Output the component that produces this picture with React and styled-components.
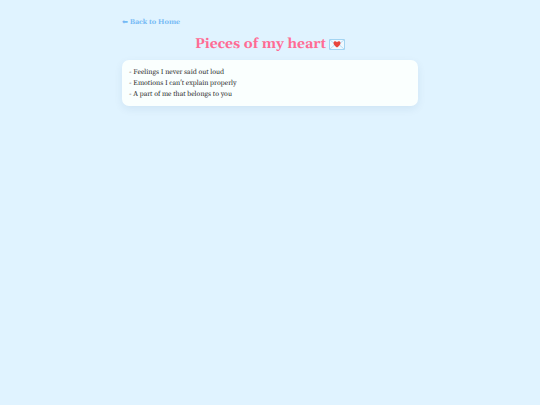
import React from 'react';
import styled, { createGlobalStyle } from 'styled-components';

const notes = [
  'Feelings I never said out loud',
  "Emotions I can't explain properly",
  'A part of me that belongs to you',
];

const App = () => {
  return (
    <>
      <GlobalStyle />
      <Page>
        <BackLink href="#home">⬅ Back to Home</BackLink>
        <Title>
          Pieces of my heart
          <LetterIcon />
        </Title>
        <Card>
          {notes.map((note) => (
            <Note key={note}>- {note}</Note>
          ))}
        </Card>
      </Page>
    </>
  );
};

const LetterIcon = () => (
  <Letter viewBox="0 0 32 22" role="img" aria-label="love letter">
    <rect x="1" y="1" width="30" height="20" rx="1" fill="#f0f9ff" stroke="#8cc8ee" strokeWidth="1.5" />
    <path d="M1 21 L12 11 M31 21 L20 11 M1 1 L14 12 Q16 14 18 12 L31 1" fill="none" stroke="#a3d4f0" strokeWidth="1.5" />
    <path
      d="M16 17 C12 14 9 11 9 8 C9 4 14 3.500 16 6.500 C18 3.500 23 4 23 8 C23 11 20 14 16 17 Z"
      fill="#e8453c"
    />
  </Letter>
);

const GlobalStyle = createGlobalStyle`
  * {
    box-sizing: border-box;
  }
  body {
    margin: 0;
    background: #e0f3ff;
    color: #333;
    font-family: Georgia, Gelasio, 'Liberation Serif', 'DejaVu Sans', serif;
    text-rendering: geometricPrecision;
  }
`;

const Page = styled.main`
  width: 100%;
  max-width: 296px;
  margin: 0 auto;
  padding: 18px 0;
`;

const BackLink = styled.a`
  display: block;
  color: #74b9f5;
  font-size: 7px;
  font-weight: 700;
  line-height: 11px;
  text-decoration: none;
`;

const Title = styled.h1`
  display: flex;
  align-items: center;
  justify-content: center;
  gap: 3px;
  margin: 4px 0 5px;
  color: #ff6b94;
  font-size: 14px;
  line-height: 22px;
`;

const Letter = styled.svg`
  width: 16px;
  height: 11px;
`;

const Card = styled.section`
  padding: 8px 7px 5px;
  border-radius: 7px;
  background: #fafffe;
  box-shadow: 0 3px 9px rgba(0, 60, 110, 0.08);
`;

const Note = styled.p`
  margin: 0;
  font-size: 7px;
  line-height: 11px;
`;

export default App;
